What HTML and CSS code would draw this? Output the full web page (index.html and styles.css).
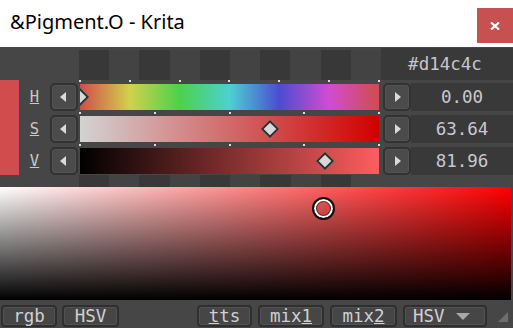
FILE: index.html
```html
<!DOCTYPE html>
<html lang="en">
<head>
    <meta charset="UTF-8">
    <meta name="viewport" content="width=device-width, initial-scale=1.0">
    <title>&amp;Pigment.O - Krita</title>
    <link rel="stylesheet" href="styles.css">
</head>
<body>
<div class="window">
    <!-- Title bar -->
    <header class="titlebar">
        <div class="title">&amp;Pigment.O - Krita</div>
        <div class="close">
            <svg width="10" height="8" viewBox="0 0 10 8"><path d="M1 0.5 L9 7.5 M9 0.5 L1 7.5" stroke="#fff" stroke-width="2.2"/></svg>
        </div>
    </header>

    <div class="panel">
        <!-- Swatches + hex -->
        <div class="top-row">
            <div class="swatches">
                <span class="cell dark"></span><span class="cell"></span>
                <span class="cell dark"></span><span class="cell"></span>
                <span class="cell dark"></span><span class="cell"></span>
                <span class="cell dark"></span><span class="cell"></span>
                <span class="cell dark"></span><span class="cell"></span>
            </div>
            <div class="hex">#d14c4c</div>
        </div>

        <!-- HSV sliders -->
        <div class="sliders">
            <div class="current"></div>
            <div class="rows">
                <div class="row">
                    <span class="label"><u>H</u></span>
                    <button class="arrow"><span class="tri-left"></span></button>
                    <div class="track">
                        <div class="ticks"><i></i><i></i><i></i><i></i><i></i><i></i><i></i></div>
                        <div class="bar hue"><span class="knob" style="left: 0%"></span></div>
                    </div>
                    <button class="arrow arrow-r"><span class="tri-right"></span></button>
                    <div class="value">0.00</div>
                </div>
                <div class="row">
                    <span class="label"><u>S</u></span>
                    <button class="arrow"><span class="tri-left"></span></button>
                    <div class="track">
                        <div class="ticks"><i></i><i></i><i></i><i></i><i></i></div>
                        <div class="bar sat"><span class="knob" style="left: 63.64%"></span></div>
                    </div>
                    <button class="arrow arrow-r"><span class="tri-right"></span></button>
                    <div class="value">63.64</div>
                </div>
                <div class="row">
                    <span class="label"><u>V</u></span>
                    <button class="arrow"><span class="tri-left"></span></button>
                    <div class="track">
                        <div class="ticks"><i></i><i></i><i></i><i></i><i></i></div>
                        <div class="bar val"><span class="knob" style="left: 81.96%"></span></div>
                    </div>
                    <button class="arrow arrow-r"><span class="tri-right"></span></button>
                    <div class="value">81.96</div>
                </div>
            </div>
        </div>

        <!-- history strip -->
        <div class="history">
            <span class="cell dark"></span><span class="cell"></span>
            <span class="cell dark"></span><span class="cell"></span>
            <span class="cell dark"></span><span class="cell"></span>
            <span class="cell dark"></span><span class="cell"></span>
            <span class="cell dark"></span>
        </div>

        <!-- SV field -->
        <div class="field">
            <span class="cursor"></span>
        </div>

        <!-- bottom toolbar -->
        <div class="toolbar">
            <button class="tool b-rgb">rgb</button>
            <button class="tool b-hsv">HSV</button>
            <button class="tool b-tts"><u>t</u>ts</button>
            <button class="tool b-mix1">mix<u>1</u></button>
            <button class="tool b-mix2">mix<u>2</u></button>
            <button class="tool combo">HSV <span class="down"></span></button>
            <svg class="grip" width="10" height="10" viewBox="0 0 10 10"><path d="M10 0 L10 10 L0 10 Z" fill="#6e6e6e"/></svg>
        </div>
    </div>
</div>
</body>
</html>
```

FILE: styles.css
```css
body {
    margin: 0;
    padding: 0;
    font-family: "DejaVu Sans Mono", monospace;
}

.window {
    width: 513px;
    height: 328px;
    overflow: hidden;
    background-color: #464646;
}

/* Title bar */
.titlebar {
    height: 47px;
    background-color: #fff;
    display: flex;
    justify-content: space-between;
    align-items: flex-start;
}

.title {
    font-family: "Noto Sans", sans-serif;
    font-size: 20px;
    line-height: 20px;
    color: #000;
    margin: 12px 0 0 10px;
}

.close {
    margin-top: 8px;
    width: 36px;
    height: 35px;
    background-color: #c75050;
    display: flex;
    align-items: center;
    justify-content: center;
}

/* Panel */
.panel {
    height: 281px;
    background-color: #464646;
}

.cell {
    flex: 1;
    background-color: #434343;
}

.cell.dark {
    background-color: #383838;
}

.top-row {
    height: 33px;
    display: flex;
}

.swatches {
    margin: 3px 0 0 79px;
    width: 302px;
    height: 30px;
    display: flex;
}

.hex {
    margin-top: 1px;
    width: 132px;
    height: 32px;
    line-height: 32px;
    background-color: #393939;
    color: #c6c6cc;
    font-size: 17.5px;
    text-align: center;
    text-indent: -4px;
}

/* Sliders */
.sliders {
    height: 95px;
    display: flex;
}

.current {
    width: 19px;
    background-color: #d14c4c;
}

.rows {
    padding-top: 3px;
    display: flex;
    flex-direction: column;
    gap: 4px;
}

.row {
    height: 28px;
    display: flex;
    align-items: center;
}

.label {
    width: 31px;
    text-align: center;
    font-size: 15.5px;
    color: #c8c8cc;
}

.arrow {
    box-sizing: border-box;
    width: 28px;
    height: 28px;
    padding: 0;
    border: 2px solid #323232;
    border-radius: 5px;
    background-color: #4b4b4b;
    box-shadow: inset 0 0 0 1px #535353;
    display: flex;
    align-items: center;
    justify-content: center;
}

.arrow-r {
    margin-left: 4px;
}

.tri-left {
    width: 0;
    height: 0;
    border-top: 5px solid transparent;
    border-bottom: 5px solid transparent;
    border-right: 6px solid #dadada;
    margin-left: -2px;
}

.tri-right {
    width: 0;
    height: 0;
    border-top: 5px solid transparent;
    border-bottom: 5px solid transparent;
    border-left: 6px solid #dadada;
    margin-left: 2px;
}

.track {
    position: relative;
    width: 299px;
    height: 26px;
    margin-left: 2px;
}

.ticks {
    position: absolute;
    top: -4px;
    left: -1px;
    right: -1px;
    height: 2px;
    display: flex;
    justify-content: space-between;
}

.ticks i {
    width: 2px;
    height: 2px;
    background-color: #dcdcdc;
}

.bar {
    position: relative;
    height: 26px;
    overflow: hidden;
}

.hue {
    background: linear-gradient(to right, #d14c4c, #d1d14c, #4cd14c, #4cd1d1, #4c4cd1, #d14cd1, #d14c4c);
}

.sat {
    background: linear-gradient(to right, #d3d3d3, #d10000);
}

.val {
    background: linear-gradient(to right, #000, #ff5d5d);
}

.knob {
    position: absolute;
    top: 50%;
    width: 9px;
    height: 9px;
    border: 2px solid #2e2e2e;
    background-color: #d8d8d8;
    transform: translate(-50%, -50%) rotate(45deg);
}

.value {
    width: 102px;
    height: 28px;
    line-height: 28px;
    background-color: #393939;
    color: #c8c8d0;
    font-size: 17.5px;
    text-align: center;
}

/* History */
.history {
    height: 12px;
    width: 272px;
    margin-left: 79px;
    display: flex;
}

/* Saturation / value field */
.field {
    position: relative;
    width: 511px;
    height: 113px;
    background: linear-gradient(to top, #000, rgba(0, 0, 0, 0)), linear-gradient(to right, #fff, #f00);
}

.cursor {
    position: absolute;
    left: 312px;
    top: 10px;
    box-sizing: border-box;
    width: 23px;
    height: 23px;
    border: 2px solid #111;
    border-radius: 50%;
    box-shadow: inset 0 0 0 2px #fff, inset 0 0 0 3px rgba(0, 0, 0, 0.5);
}

/* Toolbar */
.toolbar {
    height: 28px;
    padding-top: 5px;
    box-sizing: border-box;
    display: flex;
    align-items: flex-start;
}

.tool {
    box-sizing: border-box;
    height: 22px;
    padding: 0;
    border: 2px solid #2f2f2f;
    border-radius: 4px;
    background-color: #464646;
    box-shadow: inset 0 0 0 1px #525252;
    color: #d0d0d4;
    font-family: "DejaVu Sans Mono", monospace;
    font-size: 17.5px;
    line-height: 16px;
}

.b-rgb { margin-left: 1px; width: 56px; }
.b-hsv { margin-left: 5px; width: 57px; }
.b-tts { margin-left: 78px; width: 55px; }
.b-mix1 { margin-left: 6px; width: 66px; }
.b-mix2 { margin-left: 6px; width: 67px; }

.combo {
    margin-left: 6px;
    width: 84px;
    text-align: left;
    padding-left: 8px;
    display: flex;
    align-items: center;
}

.down {
    margin-left: 11px;
    width: 0;
    height: 0;
    border-left: 7px solid transparent;
    border-right: 7px solid transparent;
    border-top: 7px solid #a8a8a8;
}

.grip {
    margin: 7px 0 0 11px;
}
```
